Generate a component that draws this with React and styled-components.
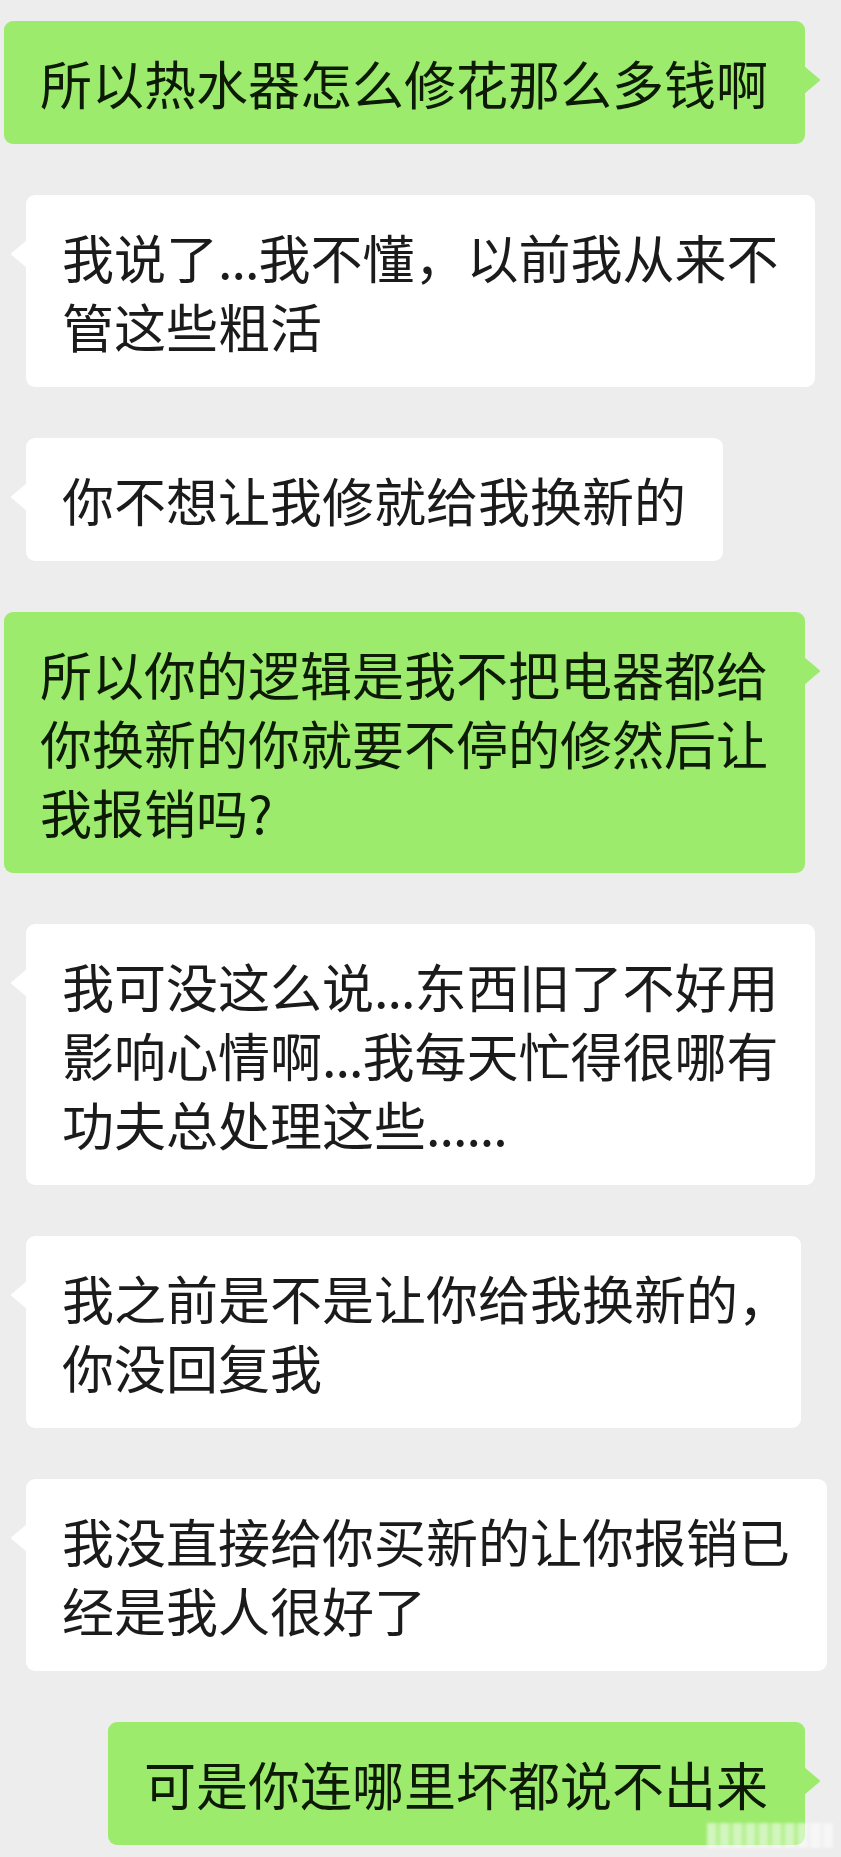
import React from "react";
import styled, { createGlobalStyle } from "styled-components";

const GlobalStyle = createGlobalStyle`
  html, body {
    margin: 0;
    padding: 0;
    background: #ededed;
  }
  body {
    font-family: "Noto Sans CJK SC", "Noto Sans", sans-serif;
  }
`;

const Page = styled.main`
  position: relative;
  width: 841px;
  min-height: 1857px;
  box-sizing: border-box;
  padding: 21px 0 12px;
  display: flex;
  flex-direction: column;
  gap: 51px;
  background: #ededed;
`;

const Row = styled.div`
  display: flex;
  justify-content: ${(p) => (p.$mine ? "flex-end" : "flex-start")};
  padding: ${(p) => (p.$mine ? "0 36px 0 0" : "0 0 0 26px")};
`;

const Bubble = styled.div`
  position: relative;
  box-sizing: border-box;
  padding: 27px 37px 27px 36px;
  border-radius: 9px;
  background: ${(p) => (p.$mine ? "#9ceb6d" : "#ffffff")};
  color: ${(p) => (p.$mine ? "#0c1a06" : "#1b1b1b")};
  font-size: 52px;
  line-height: 69px;
  font-weight: 400;

  &::after {
    content: "";
    position: absolute;
    top: 45px;
    width: 16px;
    height: 28px;
    background: inherit;
    ${(p) =>
      p.$mine
        ? `right: -15px; clip-path: polygon(0 0, 100% 48%, 100% 52%, 0 100%);`
        : `left: -15px; clip-path: polygon(100% 0, 0 48%, 0 52%, 100% 100%);`}
  }
`;

const Line = styled.div`
  white-space: nowrap;
`;

const Dots = styled.span`
  letter-spacing: -1px;
`;

const EndPunct = styled.span`
  display: inline-block;
  width: 0.5em;
  overflow: visible;
`;

const Watermark = styled.div`
  position: absolute;
  right: 8px;
  bottom: 9px;
  width: 126px;
  height: 25px;
  background: repeating-linear-gradient(
    90deg,
    rgba(255, 255, 255, 0.55) 0 9px,
    rgba(255, 255, 255, 0.25) 9px 13px
  );
  filter: blur(1.5px);
  pointer-events: none;
`;

const messages = [
  { mine: true, lines: ["所以热水器怎么修花那么多钱啊"] },
  { mine: false, lines: ["我说了...我不懂，以前我从来不", "管这些粗活"] },
  { mine: false, lines: ["你不想让我修就给我换新的"] },
  {
    mine: true,
    lines: ["所以你的逻辑是我不把电器都给", "你换新的你就要不停的修然后让", "我报销吗?"],
  },
  {
    mine: false,
    lines: ["我可没这么说...东西旧了不好用", "影响心情啊...我每天忙得很哪有", "功夫总处理这些......"],
  },
  { mine: false, lines: ["我之前是不是让你给我换新的", "你没回复我"], endPunct: ["，", null] },
  { mine: false, lines: ["我没直接给你买新的让你报销已", "经是我人很好了"] },
  { mine: true, lines: ["可是你连哪里坏都说不出来"] },
];

function renderText(text) {
  return text.split(/(\.+)/).map((part, k) =>
    /^\.+$/.test(part) ? <Dots key={k}>{part}</Dots> : part
  );
}

export default function App() {
  return (
    <>
      <GlobalStyle />
      <Page>
        {messages.map((m, i) => (
          <Row key={i} $mine={m.mine}>
            <Bubble $mine={m.mine}>
              {m.lines.map((l, j) => (
                <Line key={j}>
                  {renderText(l)}
                  {m.endPunct && m.endPunct[j] ? <EndPunct>{m.endPunct[j]}</EndPunct> : null}
                </Line>
              ))}
            </Bubble>
          </Row>
        ))}
        <Watermark />
      </Page>
    </>
  );
}
